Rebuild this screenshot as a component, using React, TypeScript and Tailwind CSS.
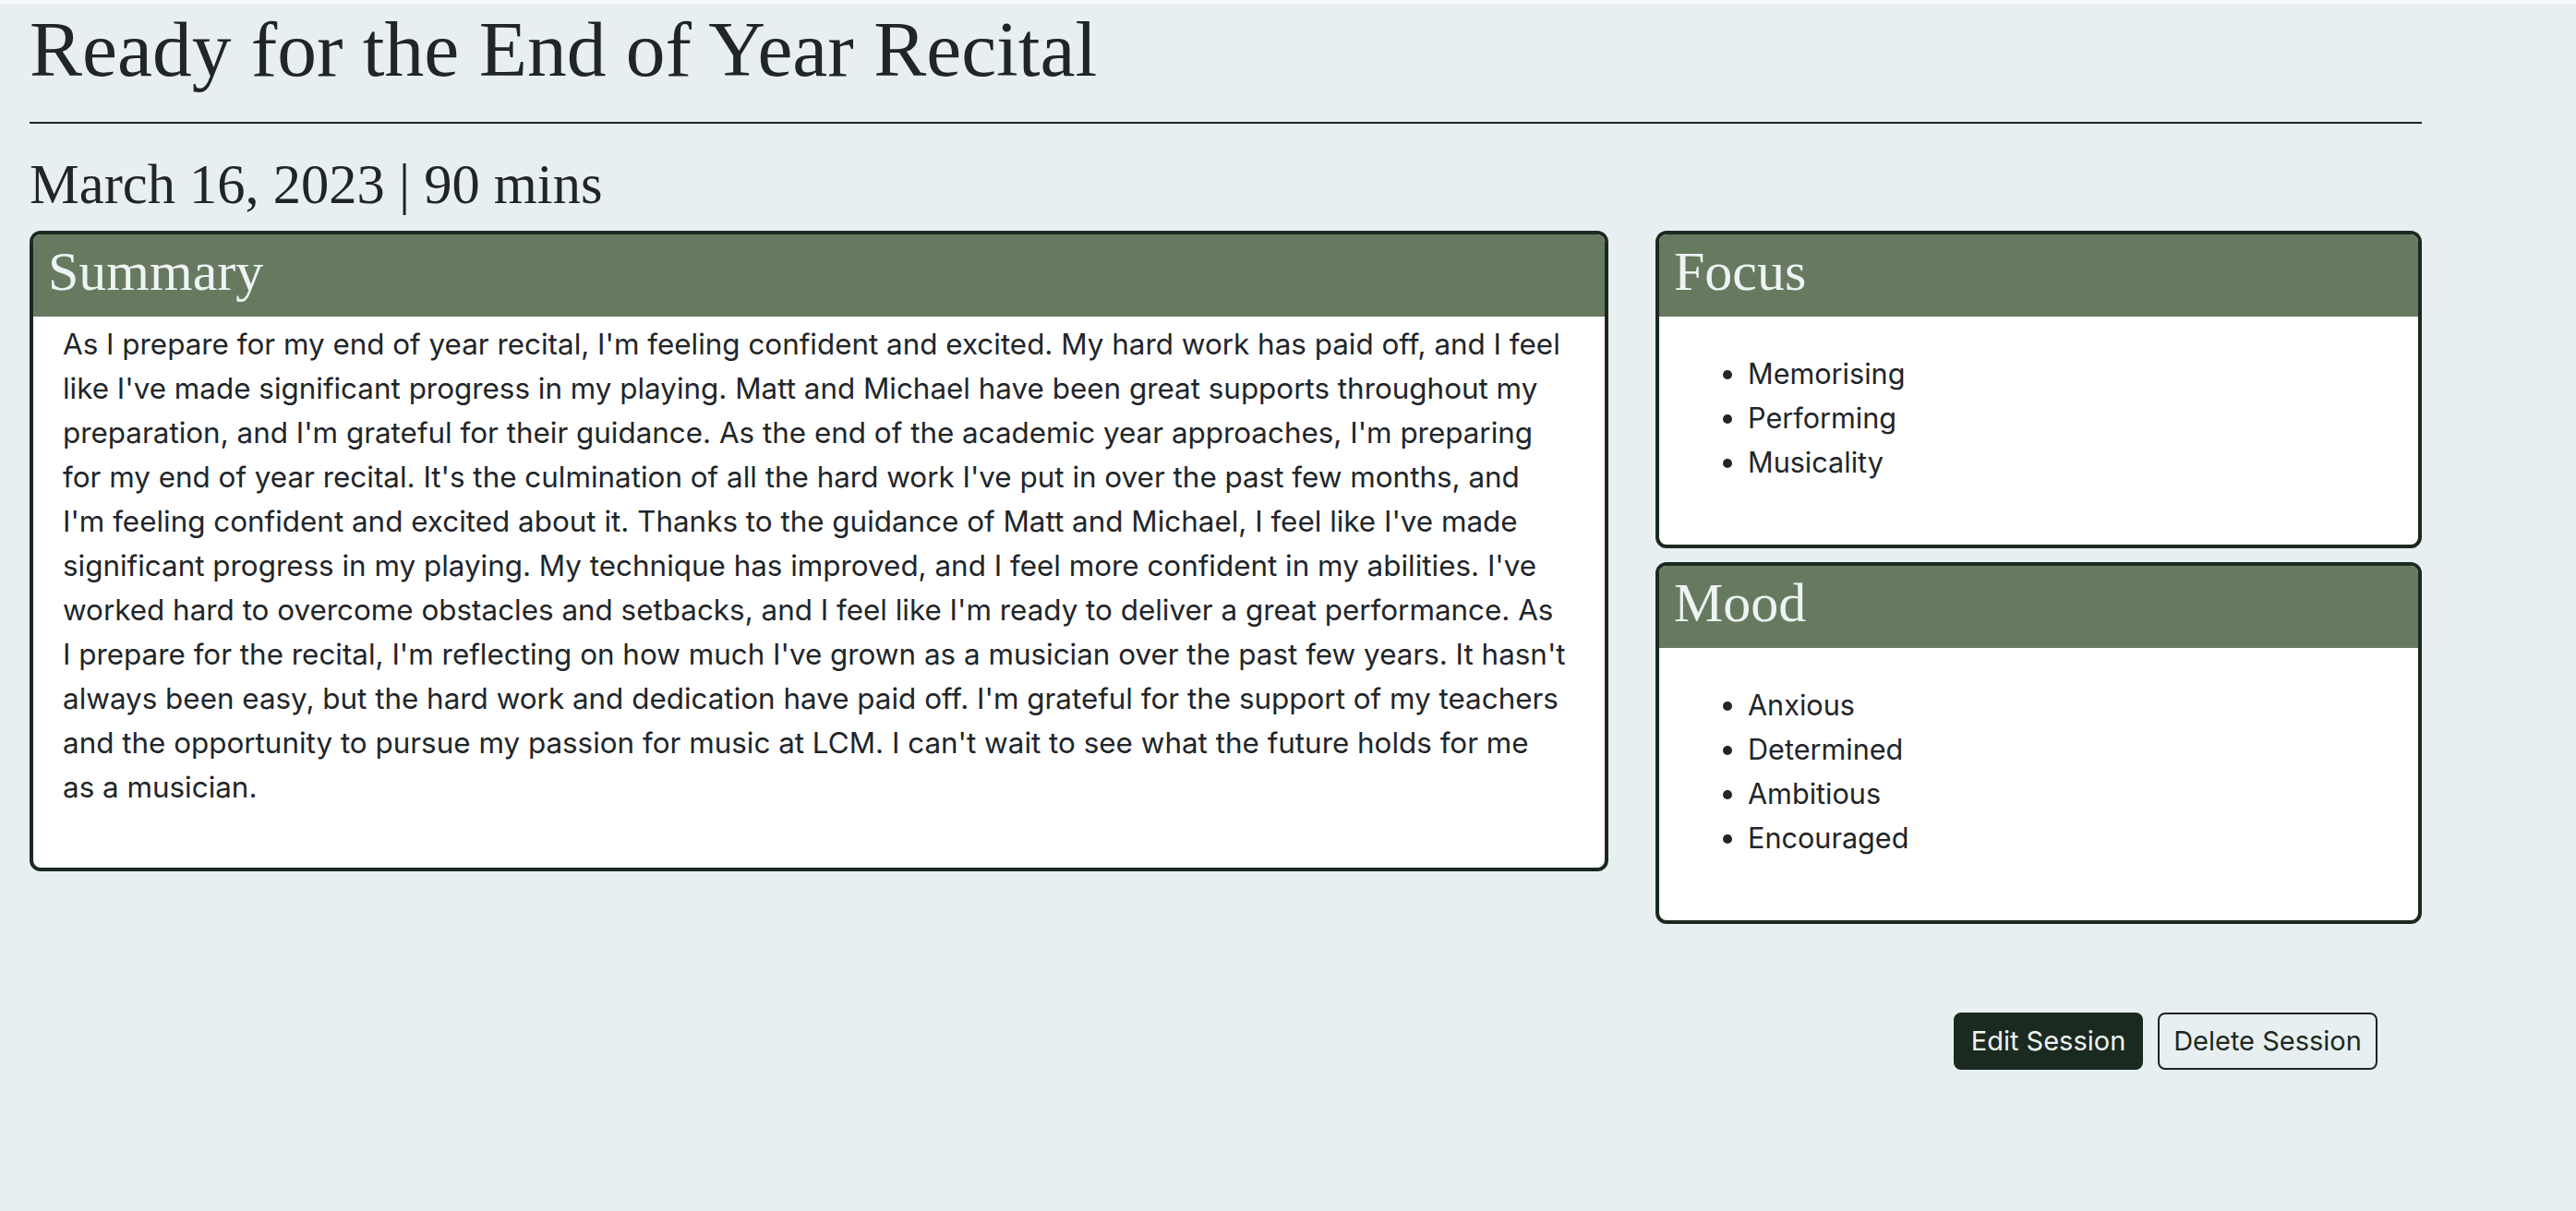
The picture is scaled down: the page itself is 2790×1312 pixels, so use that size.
import React from "react";

const serif = { fontFamily: '"Liberation Serif", "Times New Roman", serif' };
const sans = { fontFamily: 'Inter, "Open Sans", sans-serif' };

// wrapped the same way as the original layout
const summaryLines = [
  "As I prepare for my end of year recital, I'm feeling confident and excited. My hard work has paid off, and I feel",
  "like I've made significant progress in my playing. Matt and Michael have been great supports throughout my",
  "preparation, and I'm grateful for their guidance. As the end of the academic year approaches, I'm preparing",
  "for my end of year recital. It's the culmination of all the hard work I've put in over the past few months, and",
  "I'm feeling confident and excited about it. Thanks to the guidance of Matt and Michael, I feel like I've made",
  "significant progress in my playing. My technique has improved, and I feel more confident in my abilities. I've",
  "worked hard to overcome obstacles and setbacks, and I feel like I'm ready to deliver a great performance. As",
  "I prepare for the recital, I'm reflecting on how much I've grown as a musician over the past few years. It hasn't",
  "always been easy, but the hard work and dedication have paid off. I'm grateful for the support of my teachers",
  "and the opportunity to pursue my passion for music at LCM. I can't wait to see what the future holds for me",
  "as a musician.",
];

const focus = ["Memorising", "Performing", "Musicality"];
const mood = ["Anxious", "Determined", "Ambitious", "Encouraged"];

function CardHeader({ title }: { title: string }) {
  return (
    <div className="h-[89px] bg-[#677a60] pl-[16px] pt-[5px]">
      <h3 className="text-[60px] leading-[70px] text-[#eef3f3]" style={serif}>
        {title}
      </h3>
    </div>
  );
}

function ListCard({ title, items }: { title: string; items: string[] }) {
  return (
    <div className="overflow-hidden rounded-[12px] border-4 border-[#1b2a20] bg-white">
      <CardHeader title={title} />
      <ul className="list-disc pb-[65px] pl-[96px] pt-[38px] text-[30.6px] leading-[48px] text-[#212529]" style={sans}>
        {items.map((item) => (
          <li key={item}>{item}</li>
        ))}
      </ul>
    </div>
  );
}

export default function App() {
  return (
    <div className="min-h-screen bg-[#e7eff1] text-[#212529]">
      <div className="h-[4px] bg-[#f5f9fa]" />
      <div className="ml-[32px] w-[2591px]">
        <h1 className="text-[85.5px] leading-[98px]" style={serif}>
          Ready for the End of Year Recital
        </h1>
        <div className="mt-[30px] h-[2px] bg-[#1b2a20]" />
        <h3 className="mt-[30px] text-[60.5px] leading-[72px]" style={serif}>
          March 16, 2023 | 90 mins
        </h3>

        <div className="mt-[14px] grid grid-cols-[1710px_830px] items-start gap-x-[51px]">
          <div className="overflow-hidden rounded-[12px] border-4 border-[#1b2a20] bg-white">
            <CardHeader title="Summary" />
            <p className="whitespace-nowrap px-[32px] pb-[63px] pt-[6px] text-[31.4px] leading-[48px]" style={sans}>
              {summaryLines.map((line, i) => (
                <React.Fragment key={i}>
                  {line}
                  {i < summaryLines.length - 1 && <br />}
                </React.Fragment>
              ))}
            </p>
          </div>

          <div className="flex flex-col gap-[15px]">
            <ListCard title="Focus" items={focus} />
            <ListCard title="Mood" items={mood} />
          </div>
        </div>

        <div className="mt-[96px] flex justify-end gap-[16px] pr-[48px]" style={sans}>
          <button className="h-[62px] w-[205px] rounded-[8px] border-2 border-[#1b2a20] bg-[#1b2a20] text-[29px] text-[#eef3f3]">
            Edit Session
          </button>
          <button className="h-[62px] w-[238px] rounded-[8px] border-2 border-[#1f2522] text-[29px] text-[#1b2a20]">
            Delete Session
          </button>
        </div>
      </div>
    </div>
  );
}
